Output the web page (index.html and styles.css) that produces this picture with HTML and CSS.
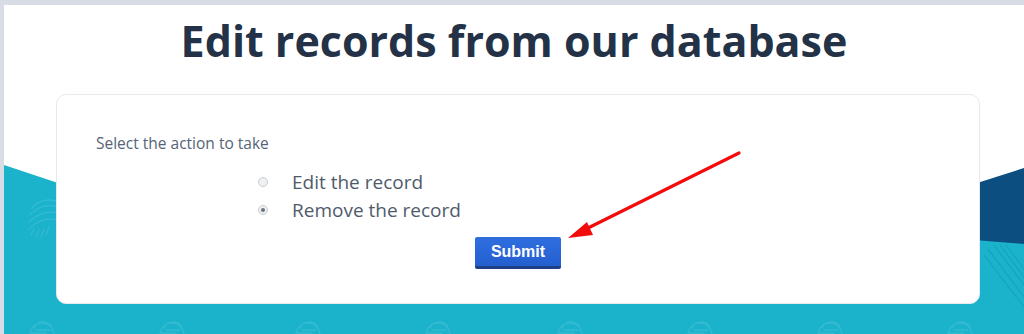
FILE: index.html
```html
<!DOCTYPE html>
<html lang="en">
<head>
<meta charset="utf-8">
<title>Edit records from our database</title>
<link rel="stylesheet" href="styles.css">
</head>
<body>
<div class="frame">
  <svg class="bg" width="1020" height="329" viewBox="0 0 1020 329" aria-hidden="true">
    <polygon points="0,160 60,180 960,200 1020,238 1020,329 0,329" fill="#1bb2cb"/>
    <polygon points="970,179 1020,163 1020,239 970,235" fill="#0b4e7f"/>
    <g fill="none" stroke="#45c1d6" stroke-width="1.3" stroke-linecap="round" opacity="0.6">
      <path d="M28,203 a22,22 0 0 1 26,-6"/>
      <path d="M26,210 a26,26 0 0 1 28,-8"/>
      <path d="M25,217 a30,30 0 0 1 29,-9"/>
      <path d="M25,224 a30,30 0 0 1 29,-9"/>
      <path d="M27,230 l3,-6 M32,232 l3,-7 M37,232 l3,-8 M42,230 l3,-8"/>
    </g>
    <g fill="none" stroke="#0e95b0" stroke-width="1.2" opacity="0.45">
      <path d="M990,240 l30,40 M996,240 l24,32 M1002,240 l18,24 M984,244 l36,48 M980,250 l40,52"/>
    </g>
    <g fill="none" stroke="#45c1d6" stroke-width="1.3" stroke-linecap="round" opacity="0.55">
      <g transform="translate(38,318)"><path d="M-12,12 a12,12 0 0 1 24,0 M-8,5 a10,10 0 0 1 18,-1 M-11,10 h15 M-6,7 h14"/></g>
      <g transform="translate(168,318)"><path d="M-12,12 a12,12 0 0 1 24,0 M-8,5 a10,10 0 0 1 18,-1 M-11,10 h15 M-6,7 h14"/></g>
      <g transform="translate(304,318)"><path d="M-12,12 a12,12 0 0 1 24,0 M-8,5 a10,10 0 0 1 18,-1 M-11,10 h15 M-6,7 h14"/></g>
      <g transform="translate(434,318)"><path d="M-12,12 a12,12 0 0 1 24,0 M-8,5 a10,10 0 0 1 18,-1 M-11,10 h15 M-6,7 h14"/></g>
      <g transform="translate(566,318)"><path d="M-12,12 a12,12 0 0 1 24,0 M-8,5 a10,10 0 0 1 18,-1 M-11,10 h15 M-6,7 h14"/></g>
      <g transform="translate(696,318)"><path d="M-12,12 a12,12 0 0 1 24,0 M-8,5 a10,10 0 0 1 18,-1 M-11,10 h15 M-6,7 h14"/></g>
      <g transform="translate(826,318)"><path d="M-12,12 a12,12 0 0 1 24,0 M-8,5 a10,10 0 0 1 18,-1 M-11,10 h15 M-6,7 h14"/></g>
      <g transform="translate(956,318)"><path d="M-12,12 a12,12 0 0 1 24,0 M-8,5 a10,10 0 0 1 18,-1 M-11,10 h15 M-6,7 h14"/></g>
    </g>
  </svg>

  <h1 class="title">Edit records from our database</h1>

  <form class="card">
    <p class="prompt">Select the action to take</p>
    <div class="options">
      <label class="option"><span class="radio"></span><span class="label-text">Edit the record</span></label>
      <label class="option"><span class="radio checked"></span><span class="label-text">Remove the record</span></label>
    </div>
    <div class="actions">
      <button type="button" class="submit">Submit</button>
    </div>
  </form>

  <svg class="arrow" width="1020" height="329" viewBox="0 0 1020 329" aria-hidden="true">
    <line x1="735" y1="148" x2="578" y2="226" stroke="#f20d0d" stroke-width="3.2" stroke-linecap="round"/>
    <polygon points="564,233 583,217 589,230" fill="#f20d0d"/>
  </svg>
</div>
</body>
</html>
```

FILE: styles.css
```css
* { box-sizing: border-box; }

html, body {
  margin: 0;
  padding: 0;
  background: #ffffff;
}

body {
  font-family: "Open Sans", "Liberation Sans", sans-serif;
  width: 1024px;
  height: 334px;
  overflow: hidden;
}

.frame {
  position: relative;
  width: 1024px;
  height: 334px;
  border-top: 5px solid #d8dde5;
  border-left: 4px solid #d8dde5;
  overflow: hidden;
  display: flex;
  flex-direction: column;
}

.bg {
  position: absolute;
  left: 0;
  top: 0;
  z-index: 0;
}

.arrow {
  position: absolute;
  left: 0;
  top: 0;
  z-index: 3;
  pointer-events: none;
}

.title {
  position: relative;
  z-index: 1;
  margin: 7px 0 0 0;
  height: 58px;
  line-height: 58px;
  font-size: 43px;
  font-weight: 700;
  color: #243247;
  text-align: center;
}

.card {
  position: relative;
  z-index: 1;
  margin: 24px 44px 0 52px;
  height: 210px;
  background: #ffffff;
  border: 1px solid #e6e9ee;
  border-radius: 10px;
  padding: 37px 39px 0 39px;
  display: flex;
  flex-direction: column;
}

.prompt {
  margin: 0;
  font-size: 15.5px;
  line-height: 22px;
  color: #556477;
}

.options {
  margin: 14px 0 0 162px;
  display: flex;
  flex-direction: column;
}

.option {
  display: flex;
  align-items: center;
  height: 28px;
}

.radio {
  width: 10px;
  height: 10px;
  border-radius: 50%;
  border: 1px solid #c9cdd2;
  background: #eef0f2;
  margin-right: 24px;
  display: flex;
  align-items: center;
  justify-content: center;
}

.radio.checked::after {
  content: "";
  width: 4px;
  height: 4px;
  border-radius: 50%;
  background: #6c737b;
}

.label-text {
  font-size: 19px;
  color: #4f5b6b;
}

.actions {
  margin-top: 13px;
  display: flex;
  justify-content: center;
}

.submit {
  width: 86px;
  height: 32px;
  border: none;
  border-bottom: 3px solid #1c3f86;
  border-radius: 2px;
  background: linear-gradient(#2f6ee0, #245fcf);
  color: #ffffff;
  font-family: "Liberation Sans", Arial, sans-serif;
  font-weight: 700;
  font-size: 16px;
  padding: 0;
  cursor: pointer;
}
```
